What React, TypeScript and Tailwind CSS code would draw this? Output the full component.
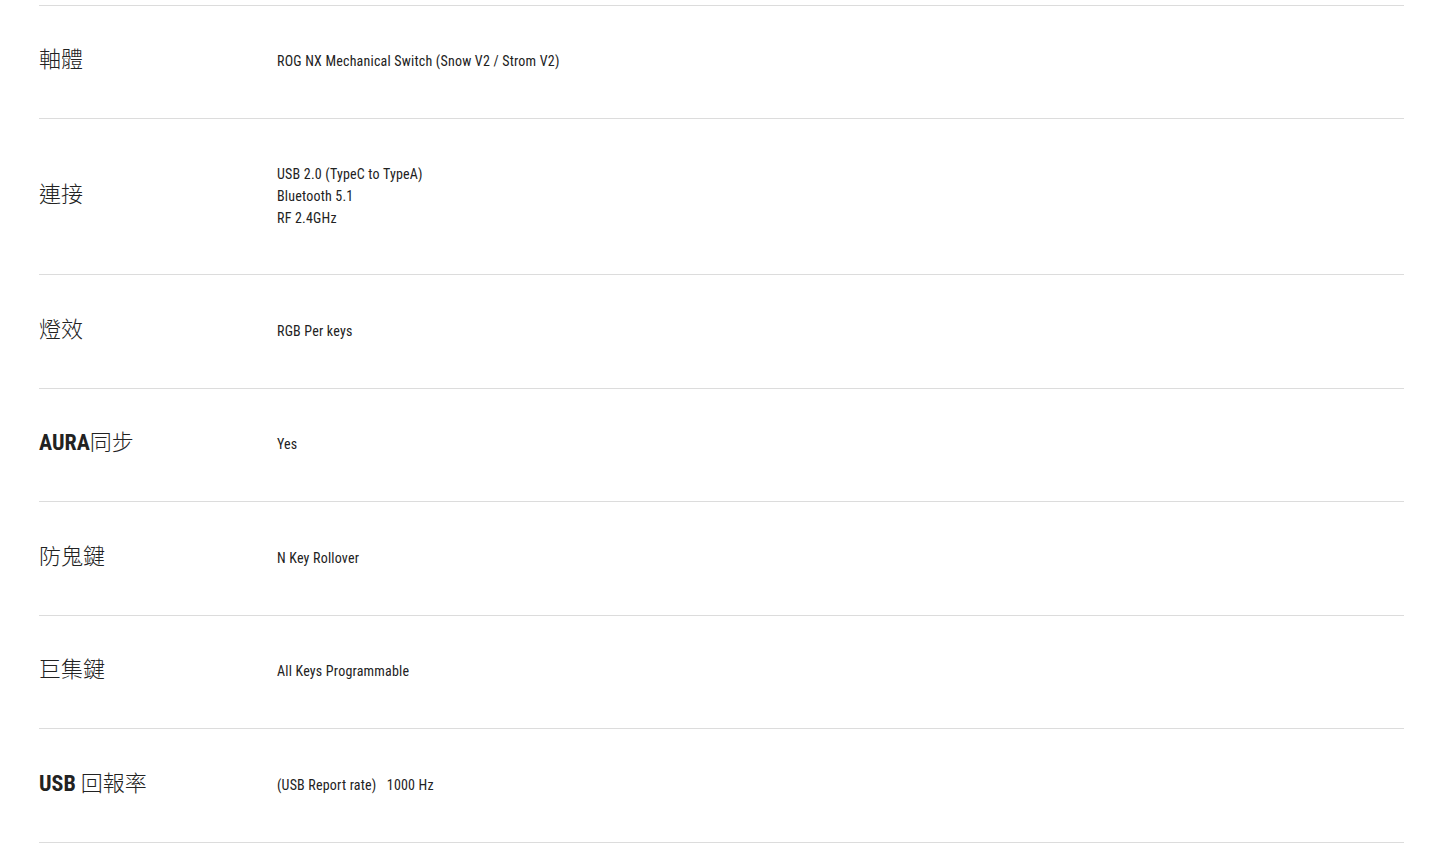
const specs: { label: React.ReactNode; values: React.ReactNode[] }[] = [
  { label: "軸體", values: ["ROG NX Mechanical Switch (Snow V2 / Strom V2)"] },
  { label: "連接", values: ["USB 2.0 (TypeC to TypeA)", "Bluetooth 5.1", "RF 2.4GHz"] },
  { label: "燈效", values: ["RGB Per keys"] },
  {
    label: (
      <>
        <span className="font-bold">AURA</span>同步
      </>
    ),
    values: ["Yes"],
  },
  { label: "防鬼鍵", values: ["N Key Rollover"] },
  { label: "巨集鍵", values: ["All Keys Programmable"] },
  {
    label: (
      <>
        <span className="font-bold">USB</span> 回報率
      </>
    ),
    values: ["(USB Report rate)\u00a0\u00a0 1000 Hz"],
  },
];

const font = {
  fontFamily:
    '"Roboto Condensed", "Liberation Sans Narrow", "Roboto", "Noto Sans CJK TC", sans-serif',
};

export default function App() {
  return (
    <div className="min-h-screen bg-white pt-[4.5px] pl-[39px] pr-[28px] text-[#222]" style={font}>
      <div className="border-t border-[#dcdcdc]">
        {specs.map((s, i) => (
          <div key={i} className="flex items-center border-b border-[#dcdcdc] py-[45px] min-h-[113.5px]">
            <div className="w-[238px] shrink-0 text-[22px] leading-[22px] font-light -mt-[3px]">{s.label}</div>
            <div className="text-[14px] leading-[22px] tracking-[0.2px] -mt-[1px]">
              {s.values.map((v, j) => (
                <div key={j}>{v}</div>
              ))}
            </div>
          </div>
        ))}
      </div>
    </div>
  );
}
